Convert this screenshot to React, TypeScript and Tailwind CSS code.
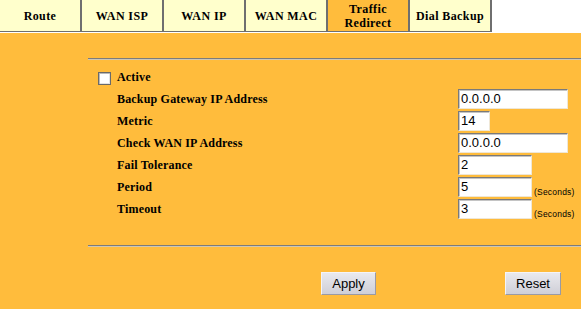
import React from 'react';

const tabs = ['Route', 'WAN ISP', 'WAN IP', 'WAN MAC', 'Traffic Redirect', 'Dial Backup'];

const fields = [
  { label: 'Backup Gateway IP Address', value: '0.0.0.0', w: 'w-[110px]' },
  { label: 'Metric', value: '14', w: 'w-[32px]' },
  { label: 'Check WAN IP Address', value: '0.0.0.0', w: 'w-[110px]' },
  { label: 'Fail Tolerance', value: '2', w: 'w-[74px]' },
  { label: 'Period', value: '5', w: 'w-[74px]', unit: true },
  { label: 'Timeout', value: '3', w: 'w-[74px]', unit: true },
];

function Field({ label, value, w, unit }: { label: string; value: string; w: string; unit?: boolean }) {
  return (
    <div className="flex h-[22px] items-start">
      <div className="w-[360px] pl-[19px] h-[20px] leading-[20px] text-[12px] tracking-[0.18px] font-bold text-black">{label}</div>
      <div
        className={`${w} h-[20px] bg-white border border-t-[#7a7a7a] border-l-[#7a7a7a] border-b-[#efe7d6] border-r-[#efe7d6] shadow-[inset_1px_1px_0_#c4c4c4] pl-[2px] leading-[18px] text-[13px] text-black font-['Liberation_Sans',sans-serif]`}
      >
        {value}
      </div>
      {unit && (
        <span className="ml-[2px] mt-[10px] text-[8.5px] leading-[10px] tracking-[0.2px] text-black font-['Liberation_Sans',sans-serif]">
          (Seconds)
        </span>
      )}
    </div>
  );
}

function Hr() {
  return <div className="ml-[88px] h-[2px] border-t border-t-[#7c7c7c] border-b border-b-[#cfc7b4]" />;
}

function Btn({ children, w }: { children: React.ReactNode; w: string }) {
  return (
    <div
      className={`${w} h-[23px] flex items-center justify-center border border-t-[#f4f4f8] border-l-[#f4f4f8] border-b-[#9a9aa4] border-r-[#9a9aa4] bg-gradient-to-b from-[#e9e9ee] to-[#cfcfd7] text-[13px] text-black font-['Liberation_Sans',sans-serif]`}
    >
      {children}
    </div>
  );
}

export default function App() {
  return (
    <div className="w-[581px] h-[309px] bg-white overflow-hidden font-['Liberation_Serif',serif]">
      {/* tab bar */}
      <div className="flex w-[492px] h-[32px] border-b border-b-[#6f6f6f]">
        {tabs.map((t) => {
          const active = t === 'Traffic Redirect';
          return (
            <div
              key={t}
              className={`w-[82px] h-[31px] flex items-center justify-center text-center border-r-2 border-r-[#6f6f6f] text-[12px] leading-[14px] tracking-[0.4px] font-bold text-black ${
                active ? 'bg-[#ffbc3c]' : 'bg-[#ffffcc]'
              }`}
            >
              {active ? (
                <span>
                  Traffic
                  <br />
                  Redirect
                </span>
              ) : (
                t
              )}
            </div>
          );
        })}
      </div>

      {/* body */}
      <div className="mt-[1px] h-[276px] bg-[#ffbc3c] pt-[25px]">
        <Hr />
        <div className="mt-[7px] ml-[98px]">
          <div className="flex h-[22px] items-start">
            <div className="w-[13px] h-[13px] mt-[5px] border border-[#6a6a6a] bg-white shadow-[inset_1px_1px_0_#b8b8b8,inset_-1px_-1px_0_#e4e4e4]" />
            <div className="ml-[6px] h-[20px] leading-[20px] text-[12px] tracking-[0.18px] font-bold text-black">Active</div>
          </div>
          {fields.map((f) => (
            <Field key={f.label} {...f} />
          ))}
        </div>
        <div className="mt-[24px]">
          <Hr />
        </div>
        <div className="flex mt-[25px]">
          <div className="ml-[321px]">
            <Btn w="w-[55px]">Apply</Btn>
          </div>
          <div className="ml-[129px]">
            <Btn w="w-[56px]">Reset</Btn>
          </div>
        </div>
      </div>
    </div>
  );
}
